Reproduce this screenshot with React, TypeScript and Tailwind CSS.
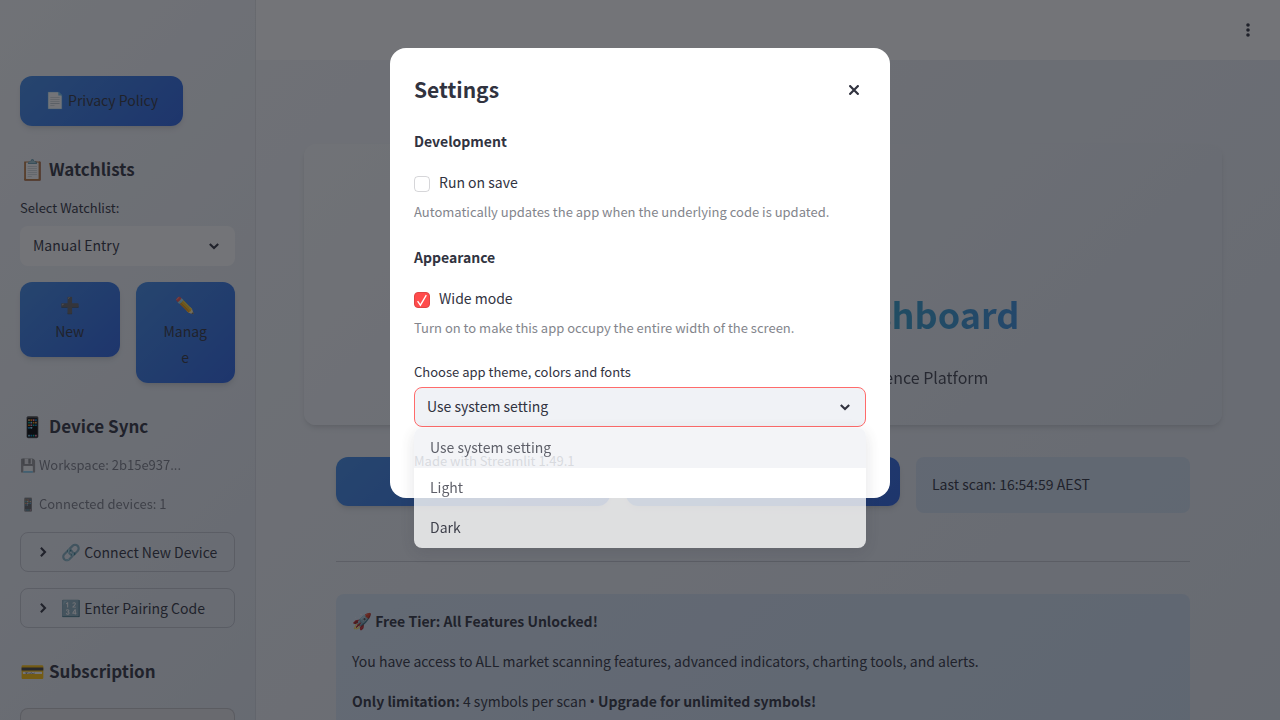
import type { ReactNode } from "react";

function Chevron({ className }: { className: string }) {
  return (
    <svg
      viewBox="0 0 10 10"
      className={className}
      fill="none"
      stroke="currentColor"
      strokeWidth="2.1"
      aria-hidden="true"
    >
      <path d="M0.8 2.9L5 7l4.2-4.1" />
    </svg>
  );
}

function Emoji({ children }: { children: string }) {
  return <span className="text-[16px]">{children}</span>;
}

function BlueButton({ children, className = "" }: { children?: ReactNode; className?: string }) {
  return (
    <button
      type="button"
      className={`rounded-xl bg-linear-135 from-[#418ae6] to-[#2b62e2] px-5 pt-[9px] pb-[13px] text-center leading-[26px] shadow-md ${className}`}
    >
      {children}
    </button>
  );
}

function SideHeading({ icon, children }: { icon: string; children: ReactNode }) {
  return (
    <h3 className="flex gap-1 text-[17px] leading-6 font-bold whitespace-nowrap">
      <span className="w-[25px] text-[20px]">{icon}</span>
      {children}
    </h3>
  );
}

function Expander({ icon, children }: { icon: string; children: ReactNode }) {
  return (
    <button
      type="button"
      className="flex h-10 w-full items-center rounded-lg border border-[#31333f]/20 pl-[17px] whitespace-nowrap"
    >
      <Chevron className="mr-[13px] size-2.5 shrink-0 -rotate-90" />
      <span className="pb-0.5 leading-5">
        <Emoji>{icon}</Emoji> {children}
      </span>
    </button>
  );
}

function Sidebar() {
  return (
    <aside className="w-64 shrink-0 overflow-hidden border-r border-[#31333f]/10 bg-linear-135 from-[#f8fafc] to-[#e2e8f0] px-5 pt-[76px]">
      <BlueButton className="h-[50px] w-[163px] whitespace-nowrap">
        <Emoji>📄</Emoji> Privacy Policy
      </BlueButton>

      <div className="mt-[31px]">
        <SideHeading icon="📋">Watchlists</SideHeading>
      </div>
      <label htmlFor="watchlist" className="mt-[17px] block text-[13px] leading-5">
        Select Watchlist:
      </label>
      <div className="relative mt-2">
        <select
          id="watchlist"
          className="h-10 w-full appearance-none rounded-lg bg-white px-[13px] pb-0.5"
        >
          <option>Manual Entry</option>
        </select>
        <Chevron className="pointer-events-none absolute top-[15px] right-4 size-2.5" />
      </div>
      <div className="mt-4 grid grid-cols-2 items-start gap-4">
        <BlueButton>
          <Emoji>➕</Emoji>
          <br />
          New
        </BlueButton>
        <BlueButton>
          <Emoji>✏️</Emoji>
          <br />
          Manag
          <br />e
        </BlueButton>
      </div>

      <div className="mt-[31px]">
        <SideHeading icon="📱">Device Sync</SideHeading>
      </div>
      <p className="mt-[17px] text-[13px] leading-5 opacity-60">💾 Workspace: 2b15e937...</p>
      <p className="mt-[19px] text-[13px] leading-5 opacity-60">📱 Connected devices: 1</p>
      <div className="mt-[18px] flex flex-col gap-4">
        <Expander icon="🔗">Connect New Device</Expander>
        <Expander icon="🔢">Enter Pairing Code</Expander>
      </div>

      <div className="mt-[31px]">
        <SideHeading icon="💳">Subscription</SideHeading>
      </div>
      <button
        type="button"
        aria-label="Manage plan"
        className="mt-[25px] h-10 w-full rounded-lg border border-[#31333f]/20 bg-[#e6e6e8]"
      />
    </aside>
  );
}

function Main() {
  return (
    <div className="flex min-w-0 flex-1 flex-col">
      <header className="flex h-[60px] shrink-0 items-center justify-end bg-white pr-6">
        <button type="button" aria-label="Main menu" className="flex h-8 w-4 items-center justify-center">
          <svg viewBox="0 0 4 14" className="h-3.5 w-1" fill="currentColor" aria-hidden="true">
            <circle cx="2" cy="2" r="1.8" />
            <circle cx="2" cy="7" r="1.8" />
            <circle cx="2" cy="12" r="1.8" />
          </svg>
        </button>
      </header>
      <main className="flex-1 pt-[84px] pr-[90px] pl-20">
        <section className="-mx-8 flex h-[281px] flex-col items-center rounded-xl bg-linear-135 from-[#f8fafc] to-[#e2e8f0] pt-[143px] shadow-md">
          <h1 className="bg-linear-to-r from-[#10b981] to-[#3b90de] bg-clip-text text-[36px] leading-[52px] font-bold whitespace-nowrap text-transparent">
            Market Scanner & Dashboard
          </h1>
          <p className="mt-6 text-[16px] leading-7 whitespace-nowrap opacity-90">
            Professional Trading and Global Market Intelligence Platform
          </p>
        </section>
        <div className="mt-8 grid grid-cols-3 items-start gap-4">
          <BlueButton className="h-[49px]" />
          <BlueButton className="h-[49px]" />
          <div className="rounded-lg bg-[#1c83e1]/10 px-4 pt-[15px] pb-[17px] leading-6">
            Last scan: 16:54:59 AEST
          </div>
        </div>
        <hr className="mt-12 border-[#31333f]/20" />
        <section className="mt-8 flex flex-col gap-4 rounded-lg bg-[#1c83e1]/10 px-4 pt-[14px] pb-[18px] leading-6">
          <p className="font-bold">
            <Emoji>🚀</Emoji> Free Tier: All Features Unlocked!
          </p>
          <p>
            You have access to ALL market scanning features, advanced indicators, charting tools, and
            alerts.
          </p>
          <p>
            <b>Only limitation:</b> 4 symbols per scan <span className="font-['Noto_Sans']">•</span>{" "}
            <b>Upgrade for unlimited symbols!</b>
          </p>
        </section>
      </main>
    </div>
  );
}

function CheckRow({ id, label, help, checked }: { id: string; label: string; help: string; checked: boolean }) {
  return (
    <div>
      <div className="flex items-center gap-[9px]">
        <span className="relative mt-1 size-4">
          <input
            id={id}
            type="checkbox"
            defaultChecked={checked}
            className="peer block size-4 appearance-none rounded border border-[#31333f]/20 checked:border-[#e04444] checked:bg-[#ff4b4b]"
          />
          <svg
            viewBox="0 0 16 16"
            className="pointer-events-none absolute inset-0 hidden size-4 peer-checked:block"
            fill="none"
            stroke="white"
            strokeWidth="1.3"
            aria-hidden="true"
          >
            <path d="M3.6 9.2L6.4 13.2 12.3 3.2" />
          </svg>
        </span>
        <label htmlFor={id} className="leading-6">
          {label}
        </label>
      </div>
      <p className="mt-2 text-[13px] leading-5 text-[#83858c]">{help}</p>
    </div>
  );
}

const themes = ["Use system setting", "Light", "Dark"];

function SettingsDialog() {
  return (
    <div
      role="dialog"
      aria-modal="true"
      aria-labelledby="settings-title"
      className="relative w-[500px] rounded-2xl bg-white px-6 pt-6 pb-[27px]"
    >
      <div className="flex items-center justify-between">
        <h2 id="settings-title" className="pt-px pb-[3px] text-[21px] leading-8 font-bold">
          Settings
        </h2>
        <button type="button" aria-label="Close" className="flex size-6 items-center justify-center">
          <svg viewBox="0 0 10 10" className="size-2.5" stroke="currentColor" strokeWidth="2.2" aria-hidden="true">
            <path d="M0.4 0.4L9.6 9.6M9.6 0.4L0.4 9.6" />
          </svg>
        </button>
      </div>
      <h3 className="mt-[21px] leading-6 font-bold">Development</h3>
      <div className="mt-[17px]">
        <CheckRow
          id="run-on-save"
          label="Run on save"
          help="Automatically updates the app when the underlying code is updated."
          checked={false}
        />
      </div>
      <h3 className="mt-[23px] leading-6 font-bold">Appearance</h3>
      <div className="mt-[17px]">
        <CheckRow
          id="wide-mode"
          label="Wide mode"
          help="Turn on to make this app occupy the entire width of the screen."
          checked
        />
      </div>
      <label htmlFor="theme" className="mt-6 block text-[13px] leading-5">
        Choose app theme, colors and fonts
      </label>
      <div className="relative mt-[5px]">
        <select
          id="theme"
          className="h-10 w-full appearance-none rounded-lg border border-[#ff6b6b] bg-[#f0f2f6] px-3 pb-0.5"
        >
          {themes.map((t) => (
            <option key={t}>{t}</option>
          ))}
        </select>
        <Chevron className="pointer-events-none absolute top-[15px] right-4 size-2.5" />
        <ul
          role="listbox"
          aria-label="Theme"
          className="absolute inset-x-0 top-[41px] z-10 overflow-hidden rounded-lg bg-white opacity-[0.78] shadow-[0_4px_16px_rgba(38,39,48,0.16)]"
        >
          {themes.map((t, i) => (
            <li
              key={t}
              role="option"
              aria-selected={i === 0}
              className="h-10 px-4 leading-[38px] aria-selected:bg-[#f0f2f6]"
            >
              {t}
            </li>
          ))}
        </ul>
      </div>
      <p className="mt-6 text-[13px] leading-5 text-[#83858c]">Made with Streamlit 1.49.1</p>
    </div>
  );
}

export default function App() {
  return (
    <div className="relative flex h-screen overflow-hidden bg-linear-135 from-[#f8fafc] to-[#e2e8f0] font-['Noto_Sans_CJK_SC',sans-serif] text-[14px] text-[#31333f]">
      <Sidebar />
      <Main />
      <div className="absolute inset-0 flex items-start justify-center bg-[#16171e]/60 pt-12">
        <SettingsDialog />
      </div>
    </div>
  );
}
